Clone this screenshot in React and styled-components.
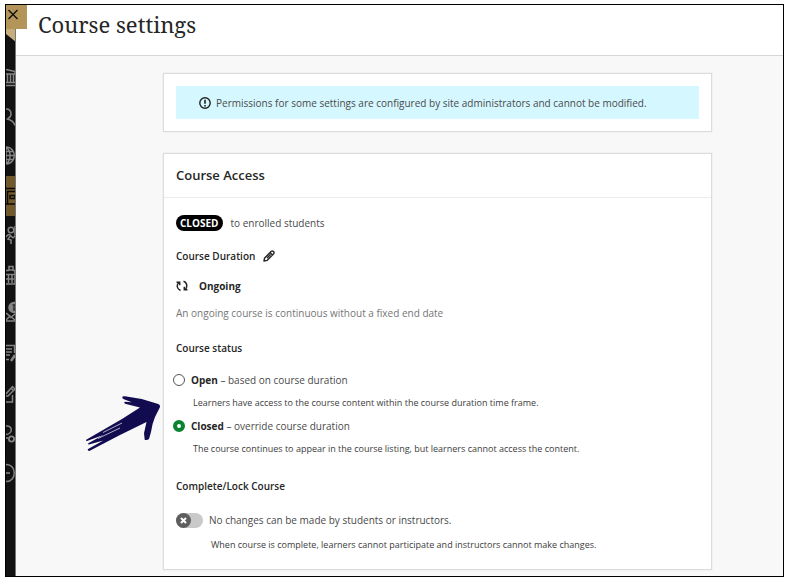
import React, { useState } from 'react';
import styled, { createGlobalStyle } from 'styled-components';

const GlobalStyle = createGlobalStyle`
  * {
    box-sizing: border-box;
  }

  body {
    margin: 0;
    background: #fff;
    color: #262626;
    font-family: 'Open Sans', 'Noto Sans', sans-serif;
    font-size: 10px;
    line-height: 16px;
  }
`;

// Styles
const Page = styled.div`
  display: flex;
  min-height: 100vh;
  padding: 4px 5px;
`;

const Frame = styled.div`
  position: relative;
  display: flex;
  flex: 1;
  border: 1px solid #000;
`;

const Sidebar = styled.nav`
  display: flex;
  flex-direction: column;
  width: 10px;
  overflow: hidden;
  background: #121212;
  border-right: 1px solid #777;
`;

const SidebarTop = styled.svg`
  display: block;
  flex: none;
  width: 10px;
  height: 52px;
`;

const NavList = styled.div`
  display: flex;
  flex-direction: column;
  height: 436px;
`;

const NavLink = styled.a`
  flex: 1;
  min-height: 0;
  color: ${({ $active }) => ($active ? '#0b0903' : '#858585')};
  background: ${({ $active }) => ($active ? '#70592a' : 'transparent')};

  svg {
    display: block;
    width: 10px;
    height: 40px;
  }
`;

const CloseButton = styled.button`
  position: absolute;
  top: 0;
  left: 0;
  display: flex;
  width: 21px;
  height: 24px;
  padding: 4px 1px;
  border: 0;
  color: #111;
  background: #b3955a;
`;

const Panel = styled.div`
  flex: 1;
  min-width: 0;
  background: #f8f8f8;
`;

const Header = styled.header`
  height: 51px;
  padding: 4px 22px;
  background: #fff;
  border-bottom: 1px solid #d6d6d6;
`;

const Title = styled.h1`
  margin: 0;
  font-family: 'Noto Serif', 'DejaVu Serif', serif;
  font-size: 22px;
  font-weight: 400;
  line-height: 30px;
`;

const Content = styled.main`
  display: flex;
  flex-direction: column;
  gap: 21px;
  padding: 17px 71px 6px 147px;
`;

const Card = styled.section`
  background: #fff;
  border: 1px solid #dcdcdc;
  box-shadow: 0 0 1px #ccc;
`;

const Notice = styled.div`
  display: flex;
  align-items: center;
  gap: 5px;
  min-height: 33px;
  margin: 12px;
  padding: 0 23px;
  color: #4a4a4a;
  background: #d5f7ff;

  svg {
    flex: none;
  }
`;

const CardHeader = styled.div`
  padding: 11px 12px;
  border-bottom: 1px solid #e8eeee;
`;

const CardTitle = styled.h2`
  margin: 0;
  font-size: 13px;
  font-weight: 600;
  line-height: 21px;
`;

const CardBody = styled.div`
  display: flex;
  flex-direction: column;
  padding: 17px 12px 16px;
`;

const Row = styled.div`
  display: flex;
  align-items: center;
  gap: ${({ $gap }) => $gap || 8}px;
  margin-bottom: ${({ $space }) => $space || 0}px;
`;

const Badge = styled.span`
  padding: 0 4px;
  border-radius: 8px;
  color: #fff;
  background: #000;
  font-weight: 700;
`;

const Muted = styled.span`
  color: #4a4a4a;
`;

const SubTitle = styled.h3`
  margin: 0;
  font-size: 10px;
  font-weight: 600;
`;

const Description = styled.p`
  margin: 0 0 19px;
  color: #767676;
`;

const IconButton = styled.button`
  display: flex;
  padding: 0;
  border: 0;
  color: #262626;
  background: none;
`;

const Options = styled.div`
  position: relative;
  display: flex;
  flex-direction: column;
  gap: 7px;
  margin: 16px 0 21px -3px;
`;

const Option = styled.div`
  display: flex;
  flex-direction: column;
  gap: 7px;
`;

const OptionLabel = styled.label`
  display: flex;
  align-items: center;
  gap: 6px;
  color: #4a4a4a;

  b {
    color: #262626;
  }
`;

const Radio = styled.input`
  appearance: none;
  width: 12px;
  height: 12px;
  margin: 0;
  border: 1px solid #555;
  border-radius: 50%;
  background: #fff;

  &:checked {
    border: 4px solid #09832f;
  }
`;

const Hint = styled.p`
  margin: 0;
  padding-left: ${({ $indent }) => $indent}px;
  color: #3c3c3c;
  font-size: 9px;
`;

const Arrow = styled.svg`
  position: absolute;
  top: 19px;
  left: -89px;
  width: 80px;
  height: 62px;
`;

const ToggleLabel = styled.label`
  display: flex;
  align-items: center;
  gap: 6px;
  margin: 18px 0 9px;
  color: #4a4a4a;
`;

const Track = styled.span`
  display: flex;
  align-items: center;
  width: 27px;
  height: 15px;
  border-radius: 8px;
  background: #c9c9c9;

  &:has(input:checked) {
    justify-content: flex-end;
  }
`;

const Thumb = styled.span`
  display: grid;
  place-items: center;
  width: 15px;
  height: 15px;
  border-radius: 50%;
  color: #fff;
  background: #5e5e5e;

  > * {
    grid-area: 1 / 1;
  }
`;

const ToggleInput = styled.input`
  appearance: none;
  width: 15px;
  height: 15px;
  margin: 0;
`;

const navItems = [
  {
    name: 'Institution',
    icon: <path d='M0 12.5L9 14.5V17H0M1.5 17V25M4.5 17V25M7.5 17V25M0 25.5H9M0 28.5H10' />,
  },
  {
    name: 'Profile',
    icon: <path d='M0 12C3.5 12 5 14 5 17C5 20 3 21 1.5 22C5 23 8 25 9 28.500' />,
  },
  {
    name: 'Activity',
    icon: <path d='M0 11C11 11 11 28 0 28M0 11C5.5 15 5.5 24 0 28M0 11V28M0 15.5H7M0 19.5H9M0 23.5H7' />,
  },
  {
    name: 'Courses',
    active: true,
    icon: <path d='M0 12.5H10M10 15.5H1.5V28M0 28H10M4 19.5H9V22.5H4Z' />,
  },
  {
    name: 'Organizations',
    icon: (
      <>
        <circle cx='5' cy='14' r='2.8' />
        <path d='M9 10V19M0 21C3 17 4 19 5 20L7 22M5 19L2 23L5 24V28M7 22L10 19' />
      </>
    ),
  },
  {
    name: 'Calendar',
    icon: <path d='M3 11.5H7V15H3ZM0 15.5H3M7 15.5H9V29H0M0 19.5H9M2.5 20V28M6 20V28M0 24H8' />,
  },
  {
    name: 'Messages',
    icon: (
      <>
        <circle cx='8' cy='12.5' r='5' fill='currentColor' />
        <path d='M8 9V16M6.5 10H9M7 14H9' stroke='#333' />
        <path d='M0 18L4 21L0 25M4 21L9 25M9 19L4 23M0 26H10' />
      </>
    ),
  },
  {
    name: 'Grades',
    icon: (
      <>
        <path d='M0 11.5H8.5V19M0 15H6M0 18H6M0 21H4M0 25.5H3' />
        <path d='M9 21L5 27' strokeWidth='2.5' />
      </>
    ),
  },
  {
    name: 'Tools',
    icon: <path d='M0 20L6.5 12.5L9 15L2 22H0M5 14L8 17M0 28H6.5V21' />,
  },
  {
    name: 'Administrator',
    icon: (
      <>
        <path d='M0 12C7 11 7 20 0 20.5M0 24H2' />
        <circle cx='5.5' cy='25' r='2.6' strokeWidth='1.8' />
      </>
    ),
  },
  {
    name: 'Sign out',
    icon: <path d='M0 11.5C11 11 11 29 0 28.5M0 20H4' />,
  },
];

const CourseSettings = () => {
  const [status, setStatus] = useState('closed');
  const [locked, setLocked] = useState(false);

  return (
    <>
      <GlobalStyle />
      <Page>
        <Frame>
          <Sidebar>
            <SidebarTop viewBox='0 0 10 52'>
              <path d='M0 24H10V37L0 29Z' fill='#c6ae7c' />
            </SidebarTop>
            <NavList>
              {navItems.map(({ name, active, icon }) => (
                <NavLink key={name} href='#' aria-label={name} $active={active}>
                  <svg viewBox='0 0 10 40' fill='none' stroke='currentColor' strokeWidth='1.5'>
                    {icon}
                  </svg>
                </NavLink>
              ))}
            </NavList>
          </Sidebar>

          <Panel>
            <Header>
              <Title>Course settings</Title>
            </Header>

            <Content>
              <Card>
                <Notice>
                  <svg width='12' height='12' viewBox='0 0 12 12' fill='none' stroke='#222' strokeWidth='1.4'>
                    <circle cx='6' cy='6' r='5.2' />
                    <path d='M6 2.8V6.8M6 8V9.4' strokeWidth='1.6' />
                  </svg>
                  Permissions for some settings are configured by site administrators and cannot be modified.
                </Notice>
              </Card>

              <Card>
                <CardHeader>
                  <CardTitle>Course Access</CardTitle>
                </CardHeader>

                <CardBody>
                  <Row $space={17}>
                    <Badge>CLOSED</Badge>
                    <Muted>to enrolled students</Muted>
                  </Row>

                  <Row $space={14}>
                    <SubTitle>Course Duration</SubTitle>
                    <IconButton type='button' aria-label='Edit course duration'>
                      <svg width='12' height='12' viewBox='0 0 12 12' fill='none' stroke='currentColor' strokeWidth='1.4' strokeLinejoin='round'>
                        <path d='M1 11L1.6 8L8.3 1.3Q9.3 .5 10.5 1.5Q11.5 2.7 10.7 3.7L4 10.4ZM7 2.6L9.4 5M4 8L7.5 4.5' />
                      </svg>
                    </IconButton>
                  </Row>

                  <Row $gap={11} $space={11}>
                    <svg width='12' height='12' viewBox='0 0 12 12' fill='none' stroke='#262626' strokeWidth='1.5'>
                      <path d='M3 2.5Q1 4 1.2 6.5Q1.6 9 4.5 10.5M7.5 1.3Q10.5 2.3 10.8 5.5Q10.8 8 9.3 9.5' />
                      <path d='M.5 2.2H3.7V5.2M11.5 9.8H8.3V6.8' />
                    </svg>
                    <b>Ongoing</b>
                  </Row>

                  <Description>An ongoing course is continuous without a fixed end date</Description>

                  <SubTitle>Course status</SubTitle>
                  <Options role='radiogroup' aria-label='Course status'>
                    <Arrow viewBox='0 0 80 62' fill='#130b50' aria-hidden='true'>
                      <path d='M38.300 5.700Q39 5 41 5.300L57.700 8L74.300 13Q76.500 14 76 16L71 26Q68 33 67 41L65 48Q63 49.500 60.700 48.700L60 42.300L62.500 31L36 44L5.300 60Q3.500 60 3.700 58.300L19.300 49.500L5 53.500Q3.500 53.500 4.300 52.200L19.300 44L3 50Q1.500 50 2.200 48.800L19 39L38 28L56 16.500L41 12.800Q39.500 11.500 40.800 10.800L47.700 11.300L39.300 8Q38 7 38.300 5.700Z' />
                      <path d='M14 47.500L36 37M19 41.500L38 32' stroke='#f8f8f8' strokeWidth='.7' />
                    </Arrow>
                    <Option>
                      <OptionLabel>
                        <Radio
                          type='radio'
                          name='status'
                          checked={status === 'open'}
                          onChange={() => setStatus('open')}
                        />
                        <span>
                          <b>Open</b> – based on course duration
                        </span>
                      </OptionLabel>
                      <Hint $indent={20}>
                        Learners have access to the course content within the course duration time frame.
                      </Hint>
                    </Option>
                    <Option>
                      <OptionLabel>
                        <Radio
                          type='radio'
                          name='status'
                          checked={status === 'closed'}
                          onChange={() => setStatus('closed')}
                        />
                        <span>
                          <b>Closed</b> – override course duration
                        </span>
                      </OptionLabel>
                      <Hint $indent={20}>
                        The course continues to appear in the course listing, but learners cannot access the content.
                      </Hint>
                    </Option>
                  </Options>

                  <SubTitle>Complete/Lock Course</SubTitle>
                  <ToggleLabel>
                    <Track>
                      <Thumb>
                        <svg width='7' height='7' viewBox='0 0 7 7' stroke='currentColor' strokeWidth='2'>
                          <path d='M1 1L6 6M6 1L1 6' />
                        </svg>
                        <ToggleInput
                          type='checkbox'
                          role='switch'
                          checked={locked}
                          onChange={() => setLocked(!locked)}
                        />
                      </Thumb>
                    </Track>
                    No changes can be made by students or instructors.
                  </ToggleLabel>
                  <Hint $indent={35}>
                    When course is complete, learners cannot participate and instructors cannot make changes.
                  </Hint>
                </CardBody>
              </Card>
            </Content>
          </Panel>

          <CloseButton type='button' aria-label='Close'>
            <svg width='12' height='12' viewBox='0 0 12 12' stroke='currentColor' strokeWidth='1.4'>
              <path d='M1.5 1L10.5 10M10.5 1L1.5 10' />
            </svg>
          </CloseButton>
        </Frame>
      </Page>
    </>
  );
};

export default CourseSettings;
